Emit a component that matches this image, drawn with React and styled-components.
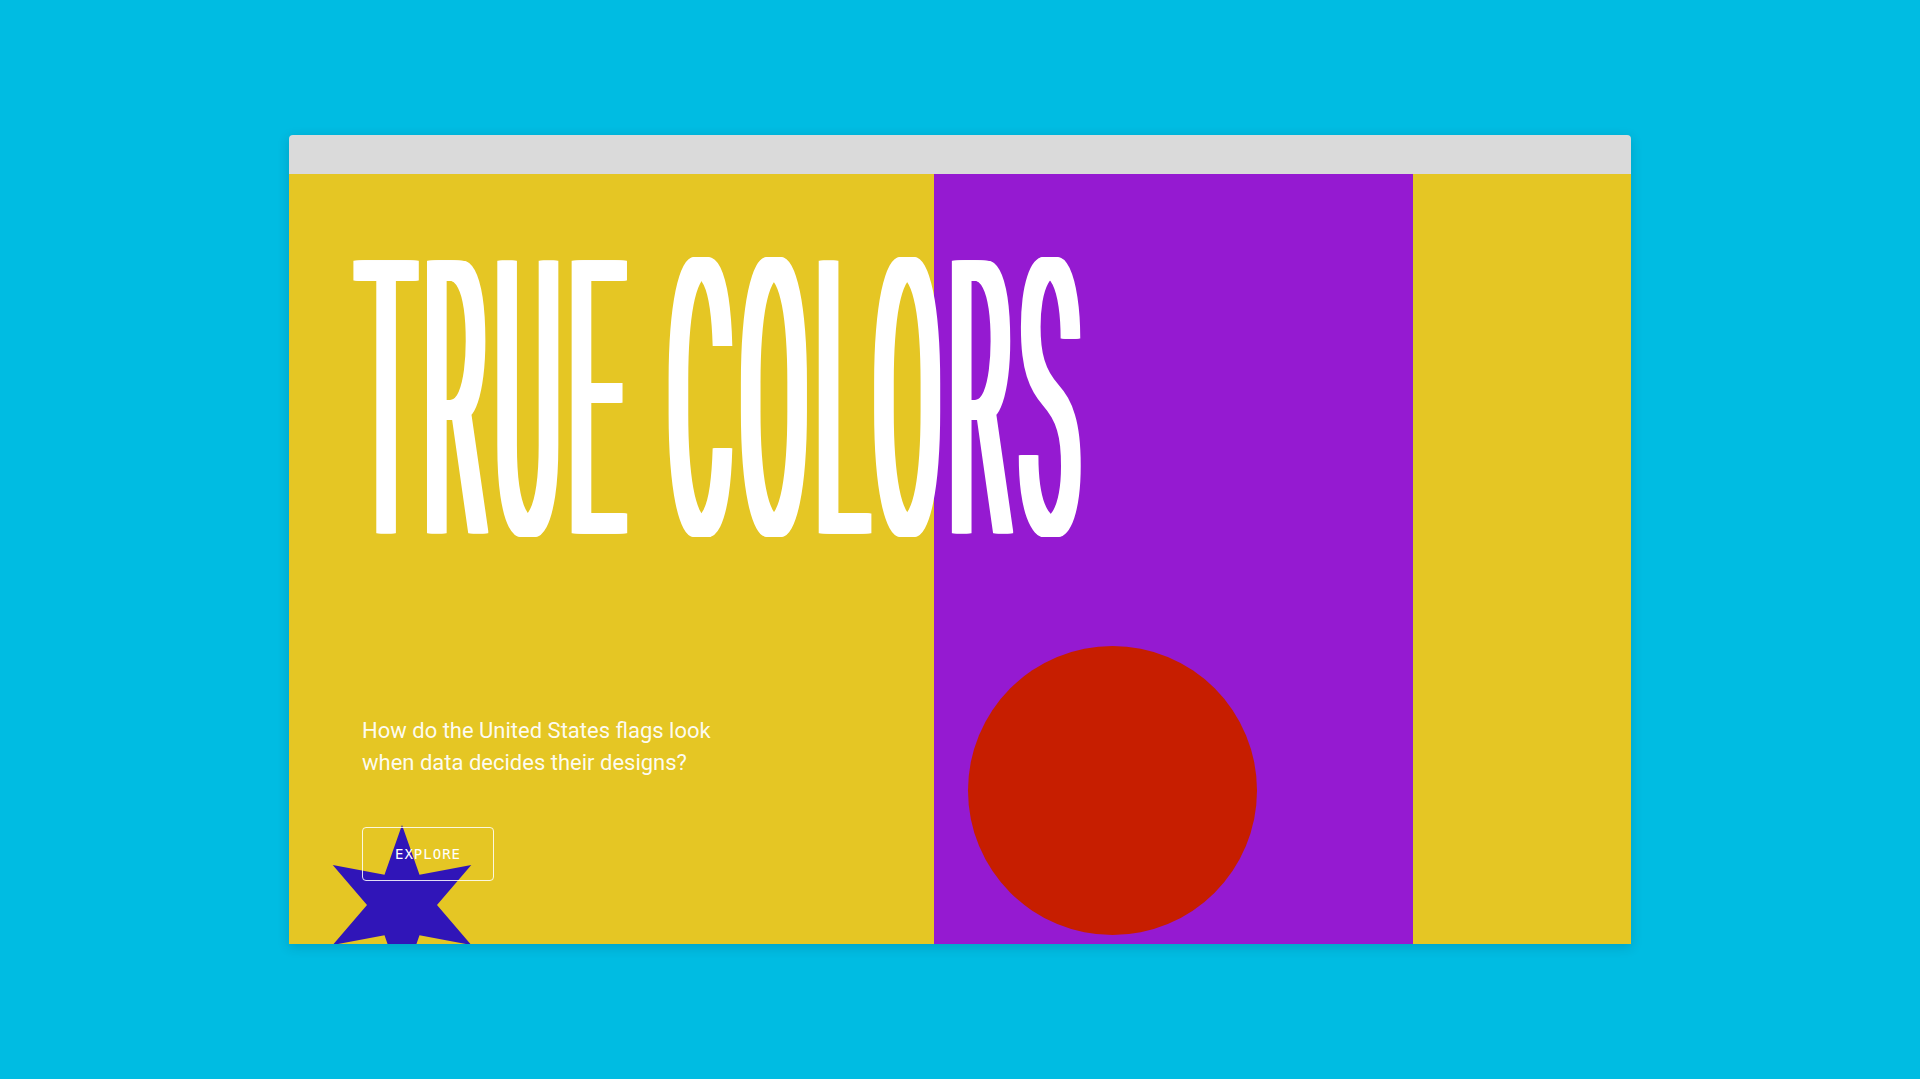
import React from "react";
import styled, { createGlobalStyle } from "styled-components";

const colors = {
  sky: "#00bce2",
  chrome: "#dadada",
  yellow: "#e5c624",
  purple: "#951ad1",
  red: "#c71e00",
  navy: "#3015b8",
};

// widen the stems only: horizontal copies of the glyphs
const stemShadow = Array.from({ length: 15 }, (_, i) => i - 7)
  .filter((x) => x !== 0)
  .map((x) => `${x}px 0 0 #fff`)
  .join(", ");

const GlobalStyle = createGlobalStyle`
  html, body {
    margin: 0;
    padding: 0;
    background: ${colors.sky};
    font-family: Roboto, "Liberation Sans", sans-serif;
  }
`;

const Page = styled.div`
  height: 1079px;
  display: flex;
  justify-content: center;
  align-items: flex-start;
  padding-top: 135px;
  box-sizing: border-box;
  overflow: hidden;
`;

const BrowserWindow = styled.div`
  width: 1342px;
  border-radius: 4px 4px 0 0;
  overflow: hidden;
  box-shadow: 0 3px 12px rgba(0, 40, 60, 0.18);
`;

const TitleBar = styled.div`
  height: 39px;
  background: ${colors.chrome};
`;

const Content = styled.div`
  position: relative;
  height: 770px;
  display: grid;
  grid-template-columns: 645px 479px 1fr;
  grid-template-rows: 100%;
  background: ${colors.yellow};
  overflow: hidden;
`;

const Stripe = styled.div`
  grid-column: 2;
  grid-row: 1;
  background: ${colors.purple};
  display: flex;
  align-items: flex-end;
  padding: 0 0 9px 34px;
`;

const Sun = styled.div`
  width: 289px;
  height: 289px;
  border-radius: 50%;
  background: ${colors.red};
`;

const Hero = styled.div`
  grid-column: 1 / -1;
  grid-row: 1;
  z-index: 2;
  display: flex;
  flex-direction: column;
  align-items: flex-start;
  padding-left: 73px;
`;

const TitleBox = styled.div`
  height: 541px;
`;

const Title = styled.h1`
  margin: 37px 0 0 -4px;
  font-family: Roboto, sans-serif;
  font-weight: 300;
  font-size: 94px;
  line-height: 94px;
  letter-spacing: 11.5px;
  white-space: nowrap;
  color: #fff;
  text-shadow: ${stemShadow};
  transform-origin: 0 0;
  transform: scaleY(4.08);
`;

const Lead = styled.p`
  margin: 0;
  font-size: 22px;
  line-height: 32px;
  color: rgba(255, 255, 255, 0.95);
`;

const ExploreButton = styled.button`
  margin-top: 48px;
  width: 132px;
  height: 54px;
  border: 1.5px solid rgba(255, 255, 255, 0.85);
  border-radius: 4px;
  background: transparent;
  color: #fff;
  font-family: "DejaVu Sans Mono", monospace;
  font-size: 14px;
  letter-spacing: 1px;
  cursor: pointer;
`;

const StarMark = styled.svg`
  position: absolute;
  left: 33px;
  top: 651px;
  z-index: 1;
`;

const starPoints = Array.from({ length: 12 }, (_, i) => {
  const a = ((-90 + i * 30) * Math.PI) / 180;
  const r = i % 2 === 0 ? 80 : 35;
  return `${(80 + r * Math.cos(a)).toFixed(2)},${(80 + r * Math.sin(a)).toFixed(2)}`;
}).join(" ");

const App = () => {
  return (
    <>
      <GlobalStyle />
      <Page>
        <BrowserWindow>
          <TitleBar />
          <Content>
            <Stripe>
              <Sun />
            </Stripe>
            <Hero>
              <TitleBox>
                <Title>TRUE COLORS</Title>
              </TitleBox>
              <Lead>
                How do the United States flags look
                <br />
                when data decides their designs?
              </Lead>
              <ExploreButton>EXPLORE</ExploreButton>
            </Hero>
            <StarMark width="160" height="160" viewBox="0 0 160 160">
              <polygon points={starPoints} fill={colors.navy} />
            </StarMark>
          </Content>
        </BrowserWindow>
      </Page>
    </>
  );
};

export default App;
